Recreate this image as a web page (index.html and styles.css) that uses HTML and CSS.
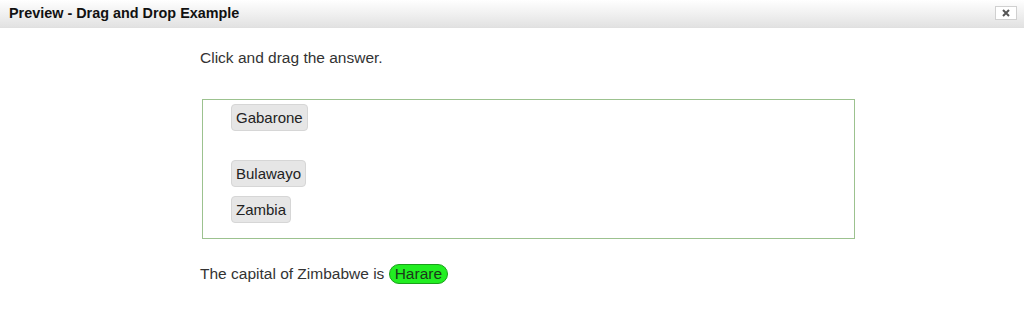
FILE: index.html
```html
<!DOCTYPE html>
<html>
<head>
<meta charset="utf-8">
<link rel="stylesheet" href="styles.css">
</head>
<body>
<div class="titlebar">
  <span class="title">Preview - Drag and Drop Example</span>
  <span class="close"><svg width="8" height="8" viewBox="0 0 8 8"><path d="M1 1L7 7M7 1L1 7" stroke="#555" stroke-width="2" fill="none"/></svg></span>
</div>
<div class="content">
  <p class="prompt">Click and drag the answer.</p>
  <div class="dropbox">
    <span class="chip">Gabarone</span>
    <div class="spacer"></div>
    <span class="chip">Bulawayo</span>
    <span class="chip">Zambia</span>
  </div>
  <p class="question">The capital of Zimbabwe is <span class="answer">Harare</span></p>
</div>
</body>
</html>
```
FILE: styles.css
```css
html, body {
  margin: 0;
  padding: 0;
  background: #fff;
  font-family: "Liberation Sans", Arial, sans-serif;
  color: #333;
}
.titlebar {
  height: 28px;
  box-sizing: border-box;
  display: flex;
  align-items: center;
  justify-content: space-between;
  padding: 0 7px 1px 9px;
  background: linear-gradient(#ffffff, #e2e2e2);
  border-bottom: 1px solid #e0e0e0;
}
.title {
  font-weight: bold;
  font-size: 14.4px;
  color: #111;
}
.close {
  width: 22px;
  height: 14px;
  box-sizing: border-box;
  border: 1px solid #d0d0d0;
  background: #fff;
  display: flex;
  align-items: center;
  justify-content: center;
}
.content {
  padding-left: 200px;
  width: 656px;
}
.prompt {
  margin: 21px 0 0;
  font-size: 15.5px;
  line-height: 17px;
}
.dropbox {
  margin: 33px 0 0 2px;
  width: 653px;
  height: 140px;
  box-sizing: border-box;
  border: 1px solid #9cc28f;
  padding: 4px 0 0 28px;
  display: flex;
  flex-direction: column;
  align-items: flex-start;
  gap: 9px;
}
.spacer {
  height: 11px;
}
.chip {
  display: inline-block;
  font-size: 15px;
  line-height: 17px;
  padding: 4px 4px;
  background: #e6e6e6;
  border: 1px solid #d6d6d6;
  border-radius: 4px;
  color: #222;
}
.question {
  margin: 25px 0 0;
  font-size: 15.5px;
  line-height: 20px;
}
.answer {
  display: inline-block;
  background: #22ee22;
  border: 1px solid #1aa01a;
  border-radius: 10px;
  padding: 0 5px;
  line-height: 18px;
  color: #1a3a1a;
}
```
